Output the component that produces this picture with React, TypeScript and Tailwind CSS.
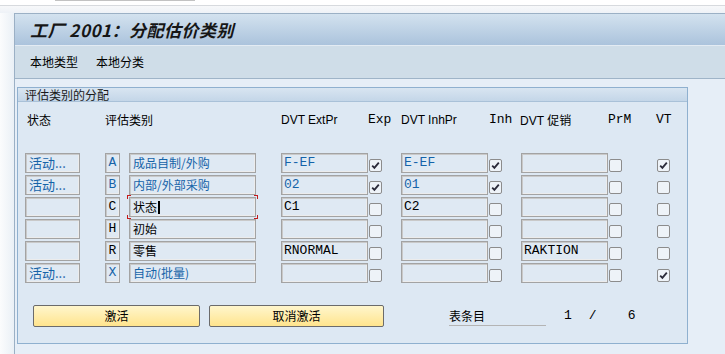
import React from 'react';

type Row = {
  status: string;
  letter: string;
  name: string;
  ext: string;
  exp: boolean;
  inh: string;
  inhCb: boolean;
  promo: string;
  prm: boolean;
  vt: boolean;
  blue: boolean;
  focus?: boolean;
};

const rows: Row[] = [
  { status: '活动...', letter: 'A', name: '成品自制/外购', ext: 'F-EF', exp: true, inh: 'E-EF', inhCb: true, promo: '', prm: false, vt: true, blue: true },
  { status: '活动...', letter: 'B', name: '内部/外部采购', ext: '02', exp: true, inh: '01', inhCb: true, promo: '', prm: false, vt: false, blue: true },
  { status: '', letter: 'C', name: '状态', ext: 'C1', exp: false, inh: 'C2', inhCb: false, promo: '', prm: false, vt: false, blue: false, focus: true },
  { status: '', letter: 'H', name: '初始', ext: '', exp: false, inh: '', inhCb: false, promo: '', prm: false, vt: false, blue: false },
  { status: '', letter: 'R', name: '零售', ext: 'RNORMAL', exp: false, inh: '', inhCb: false, promo: 'RAKTION', prm: false, vt: false, blue: false },
  { status: '活动...', letter: 'X', name: '自动(批量)', ext: '', exp: false, inh: '', inhCb: false, promo: '', prm: false, vt: true, blue: true },
];

const cjk = "font-['Noto_Sans_CJK_SC',sans-serif]";
const mono = "font-['Liberation_Mono','Noto_Sans_CJK_SC',monospace]";
const field =
  'h-[20px] bg-[#dfe9f3] border border-[#a3a3a3] shadow-[inset_1px_1px_0_#c9c9c9,inset_-1px_-1px_0_#ececec] flex items-center overflow-hidden whitespace-nowrap';

function Check({ on, className = '' }: { on: boolean; className?: string }) {
  return (
    <div
      className={`w-[13px] h-[13px] self-end mb-[1px] rounded-[2px] border border-[#8c8c8c] bg-[#eef3f8] flex items-center justify-center ${className}`}
    >
      {on && (
        <svg width="9" height="9" viewBox="0 0 9 9">
          <path d="M1.2 4.6 L3.4 6.9 L7.8 1.6" fill="none" stroke="#2b2b3a" strokeWidth="1.8" />
        </svg>
      )}
    </div>
  );
}

function DataRow({ r }: { r: Row }) {
  const color = r.blue ? 'text-[#1563a8]' : 'text-black';
  return (
    <div className="flex h-[20px]">
      <div className={`${field} ml-[7px] w-[55px] pl-[3px] text-[13px] ${color} ${cjk}`}>{r.status}</div>
      <div className={`${field} ml-[25px] w-[15px] justify-center text-[13px] ${color} ${mono}`}>{r.letter}</div>
      <div className="relative ml-[9px] w-[127px]">
        <div className={`${field} w-full pl-[3px] text-[12px] ${color} ${cjk}`}>
          {r.name}
          {r.focus && <span className="ml-[1px] inline-block w-[2px] h-[13px] bg-black" />}
        </div>
        {r.focus && (
          <>
            <span className="absolute -left-[2px] -top-[2px] w-[4px] h-[4px] border-l border-t border-[#c41a1a]" />
            <span className="absolute -right-[2px] -top-[2px] w-[4px] h-[4px] border-r border-t border-[#c41a1a]" />
            <span className="absolute -left-[2px] -bottom-[2px] w-[4px] h-[4px] border-l border-b border-[#c41a1a]" />
            <span className="absolute -right-[2px] -bottom-[2px] w-[4px] h-[4px] border-r border-b border-[#c41a1a]" />
          </>
        )}
      </div>
      <div className={`${field} ml-[25px] w-[87px] pl-[2px] text-[13px] ${color} ${mono}`}>{r.ext}</div>
      <Check on={r.exp} className="ml-[1px]" />
      <div className={`${field} ml-[19px] w-[87px] pl-[2px] text-[13px] ${color} ${mono}`}>{r.inh}</div>
      <Check on={r.inhCb} className="ml-[1px]" />
      <div className={`${field} ml-[19px] w-[87px] pl-[2px] text-[13px] text-black ${mono}`}>{r.promo}</div>
      <Check on={r.prm} className="ml-[1px]" />
      <Check on={r.vt} className="ml-[35px]" />
    </div>
  );
}

export default function App() {
  return (
    <div className={`w-[725px] h-[354px] overflow-hidden bg-[#f5f7fa] ${cjk}`}>
      <div className="h-[5px] bg-white">
        <div className="ml-[55px] w-[140px] h-px bg-[#c2c2c2]" />
      </div>
      <div className="h-px bg-[#d7dade]" />
      <div className="h-[7px] bg-gradient-to-b from-[#f7f8fa] to-[#eef2f7]" />
      <div className="flex h-[341px]">
        <div className="w-[14px] bg-gradient-to-r from-[#fbfcfd] to-[#eaf0f6]" />
        <div className="flex-1 flex flex-col border-l border-t border-[#9bb0c5] bg-[#e6eef7]">
          <div className="h-[31px] flex items-center pl-[15px] bg-gradient-to-b from-[#d3e2ef] to-[#abc3dc]">
            <span className="text-[17px] font-bold italic text-[#161616] tracking-[0.5px]">工厂 2001：分配估价类别</span>
          </div>
          <div className="h-[34px] flex items-center gap-[18px] pl-[15px] bg-[#cfdde8] border-t border-[#e3ebf3] border-b border-b-[#9fb4c8] text-[12px] text-black">
            <span>本地类型</span>
            <span>本地分类</span>
          </div>
          <div className="pl-[2px] pt-[8px]">
            <div className="w-[671px] h-[257px] border border-[#8fb0cf] bg-[#dde8f3] flex flex-col">
              <div className="h-[14px] pl-[7px] flex items-center text-[12px] leading-none text-[#1a1a1a] bg-gradient-to-b from-[#d8e5f1] to-[#c4d6e8] border-b border-[#a9c1d8]">
                评估类别的分配
              </div>
              <div className="flex h-[14px] mt-[11px] items-center text-[12px] text-black whitespace-nowrap">
                <span className="ml-[9px] w-[78px]">状态</span>
                <span className="w-[176px]">评估类别</span>
                <span className="w-[87px] font-['Liberation_Sans',sans-serif]">DVT ExtPr</span>
                <span className={`w-[33px] text-[13px] ${mono}`}>Exp</span>
                <span className="w-[88px] font-['Liberation_Sans',sans-serif]">DVT InhPr</span>
                <span className={`w-[31px] text-[13px] ${mono}`}>Inh</span>
                <span className="w-[88px]">
                  <span className="font-['Liberation_Sans',sans-serif]">DVT </span>促销
                </span>
                <span className={`w-[48px] text-[13px] ${mono}`}>PrM</span>
                <span className={`text-[13px] ${mono}`}>VT</span>
              </div>
              <div className="mt-[26px] flex flex-col gap-[2px]">
                {rows.map((r) => (
                  <DataRow key={r.letter} r={r} />
                ))}
              </div>
              <div className="mt-[22px] flex items-center">
                <button className="ml-[15px] w-[167px] h-[22px] rounded-[2px] border border-[#6b6b6b] bg-gradient-to-b from-[#fff6cc] to-[#ffe48c] text-[12px] text-black">
                  激活
                </button>
                <button className="ml-[9px] w-[175px] h-[22px] rounded-[2px] border border-[#6b6b6b] bg-gradient-to-b from-[#fff6cc] to-[#ffe48c] text-[12px] text-black">
                  取消激活
                </button>
                <div className="ml-[65px] w-[97px] h-[20px] border-b border-[#b4b4b4] text-[12px] leading-[20px] text-black">
                  表条目
                </div>
                <span className={`ml-[18px] text-[13px] text-black ${mono}`}>1</span>
                <span className={`ml-[17px] text-[13px] text-black ${mono}`}>/</span>
                <span className={`ml-[31px] text-[13px] text-black ${mono}`}>6</span>
              </div>
            </div>
          </div>
        </div>
      </div>
    </div>
  );
}
